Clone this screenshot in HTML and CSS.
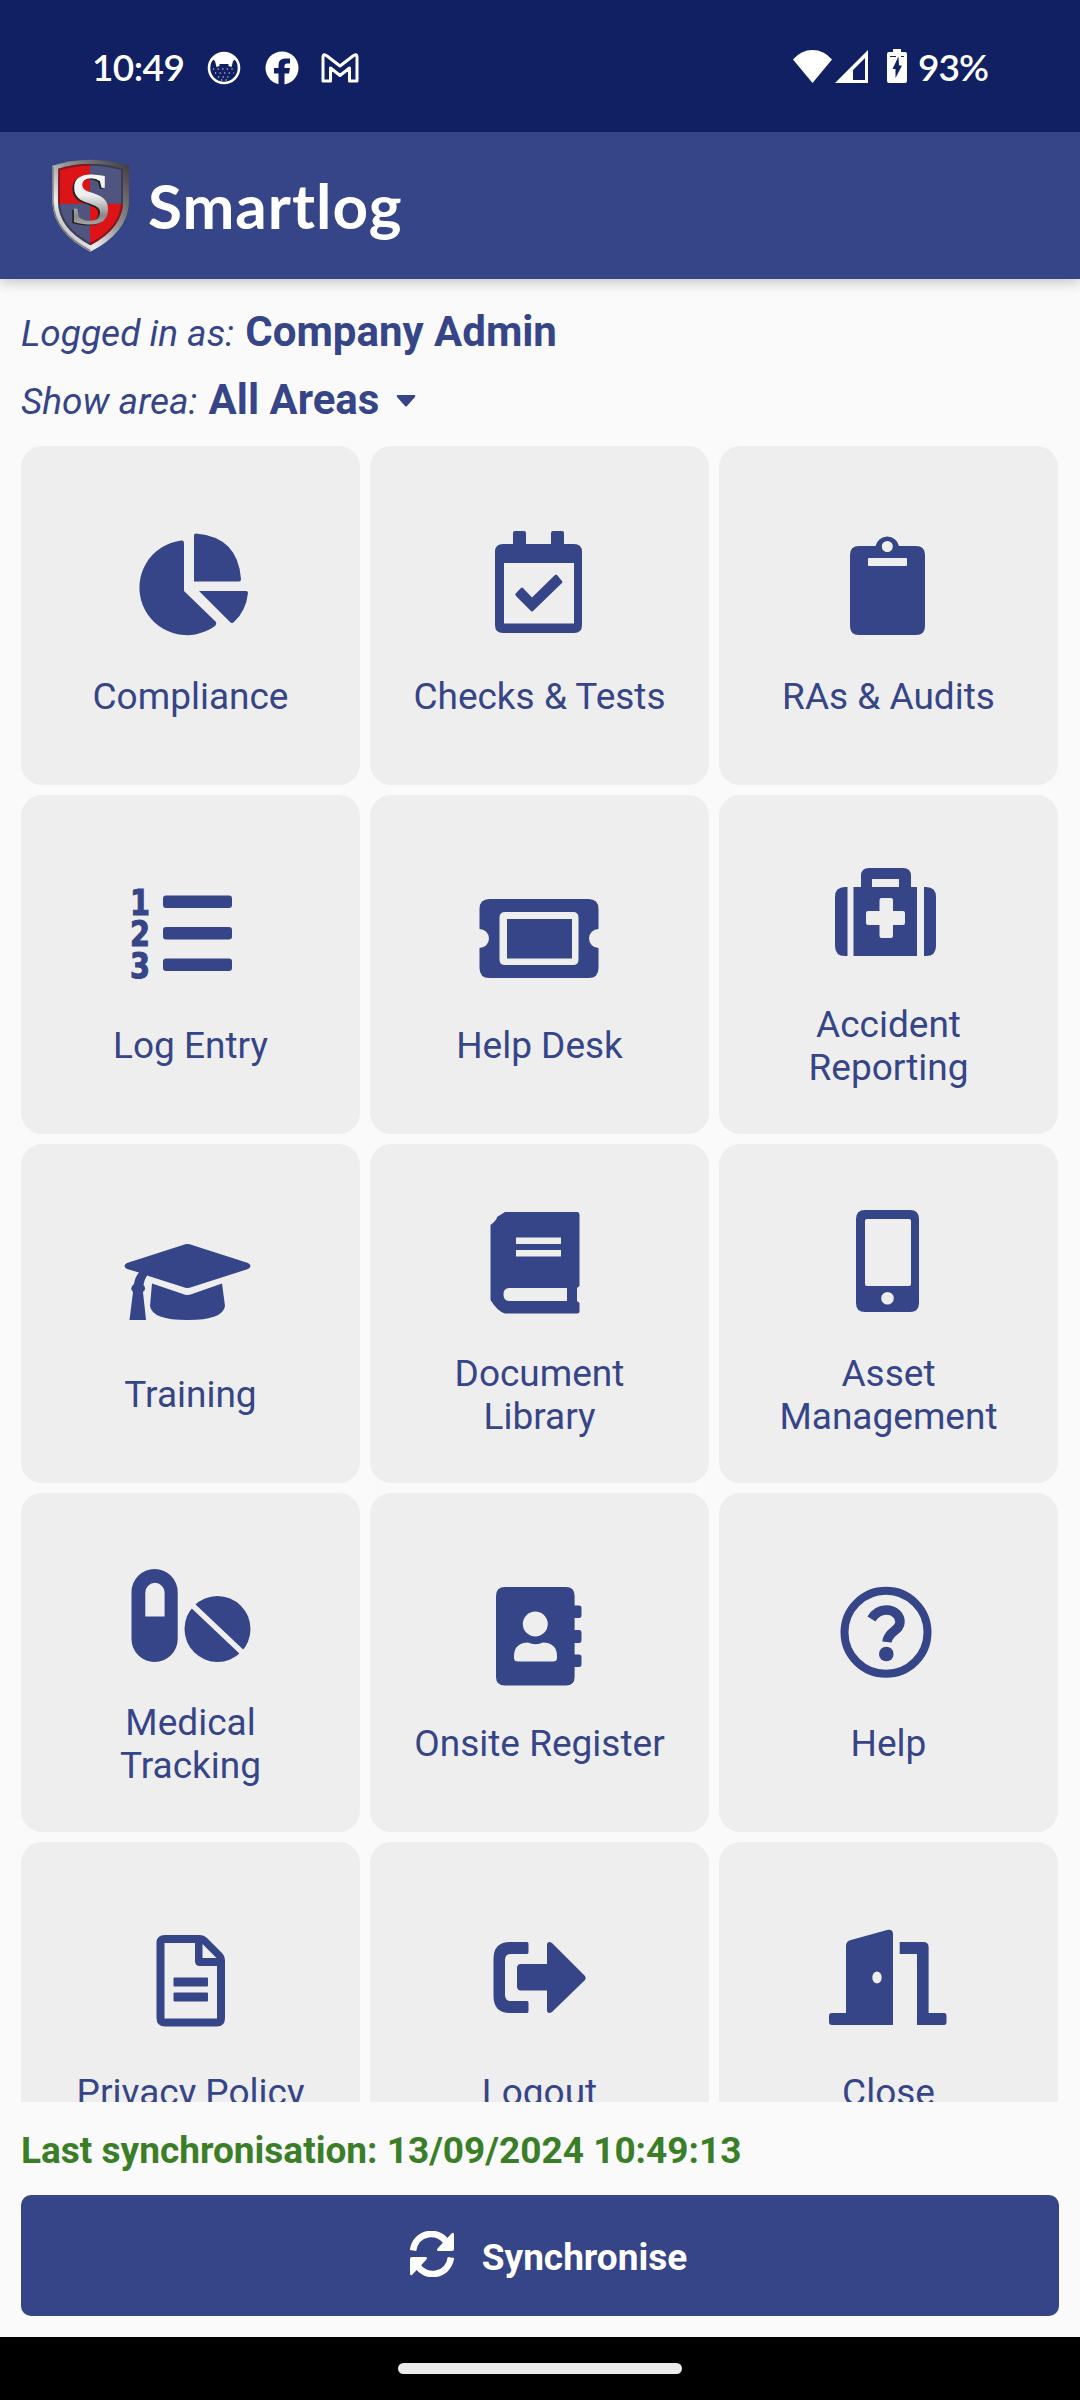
FILE: index.html
```
<!DOCTYPE html>
<html lang="en">
    <head>
        <meta charset="utf-8">
        <title>Smartlog</title>
        <link rel="stylesheet" href="styles.css">
    </head>
    <body>
        <div class="status">
            <span class="time">10:49</span>
            <svg class="cat" width="34" height="34" viewBox="0 0 34 34">
                <circle cx="17" cy="17" r="15" fill="none" stroke="#fff" stroke-width="2.6"/>
                <path fill="#fff" d="M5 8Q9 2 17 2T29 8L26 10L24.500 16L21.500 15V13H12.500V15L9.500 16L8 10Z"/>
                <path fill="none" stroke="#fff" stroke-width="1.2" stroke-dasharray="1.2 3.4" d="M6 18H28M8 22H27M11 26H24M14 29H21"/>
            </svg>
            <svg class="fb" width="34" height="34" viewBox="0 0 34 34">
                <circle cx="17" cy="17" r="16.5" fill="#fff"/>
                <path fill="#112063" d="M13.5 34V22.500H9V17H13.500V14Q13.500 7.500 20 7.500H25V12.500H22Q19.500 12.500 19.500 15V17H25L24 22.500H19.500V34Z"/>
            </svg>
            <svg class="mail" width="38" height="30" viewBox="0 0 38 30">
                <path fill="none" stroke="#fff" stroke-width="3" stroke-linejoin="round" d="M2 4Q2 0 6 3L19 13L32 3Q36 0 36 4V28H28.500V15L19 22.500L9.500 15V28H2Z"/>
            </svg>
            <div class="status-right">
                <svg width="39" height="33" viewBox="0 0 39 33"><path fill="#fff" d="M0 9.500Q8 0 19.500 0T39 9.500L19.500 33Z"/></svg>
                <svg class="signal" width="33" height="33" viewBox="0 0 33 33"><path fill="#fff" fill-rule="evenodd" d="M33 0V33H0ZM30 8L18 20V30H30Z"/></svg>
                <svg class="battery" width="20" height="34" viewBox="0 0 20 34">
                    <path fill="#fff" d="M6 0H14V3H18Q20 3 20 5V32Q20 34 18 34H2Q0 34 0 32V5Q0 3 2 3H6Z"/>
                    <path fill="#112063" d="M3 7H9V8H3ZM14 7H17V8H14ZM11.500 7.500L5.500 20H8.500V29L15 16.500H12Z"/>
                </svg>
                <span class="percent">93%</span>
            </div>
        </div>

        <div class="header">
            <svg class="shield" width="78" height="94" viewBox="36 28 234 282">
                <defs>
                    <linearGradient id="rim" x1="0" y1="1" x2="1" y2="0">
                        <stop offset="0" stop-color="#777"/>
                        <stop offset="0.300" stop-color="#eee"/>
                        <stop offset="0.550" stop-color="#999"/>
                        <stop offset="1" stop-color="#3c3535"/>
                    </linearGradient>
                    <linearGradient id="letter" x1="0" y1="0" x2="0" y2="1">
                        <stop offset="0" stop-color="#fff"/>
                        <stop offset="0.450" stop-color="#eee"/>
                        <stop offset="0.700" stop-color="#888"/>
                        <stop offset="1" stop-color="#ddd"/>
                    </linearGradient>
                    <clipPath id="inner"><path d="M55 57Q152 28 249 57V155Q249 235 151 287Q54 235 54 155Z"/></clipPath>
                </defs>
                <path fill="url(#rim)" d="M37 48Q152 12 267 48V160Q262 250 151 306Q42 250 37 160Z"/>
                <path fill="none" stroke="#777" stroke-width="4" d="M39 52V160Q44 248 151 303"/>
                <g clip-path="url(#inner)">
                    <path fill="#50557f" d="M40 30H270V300H40Z"/>
                    <path fill="#dc1418" d="M40 30H150V162H40ZM150 162H270V300H150Z"/>
                    <path fill="none" stroke="#201c2c" stroke-opacity="0.450" stroke-width="12" d="M55 57Q152 28 249 57V155Q249 235 151 287Q54 235 54 155Z"/>
                </g>
                <text class="letter-shadow" x="85" y="226">S</text>
                <text class="letter" x="90" y="224">S</text>
            </svg>
            <h1>Smartlog</h1>
        </div>

        <div class="main">
            <div class="line"><i>Logged in as:</i> <b>Company Admin</b></div>
            <div class="line"><i>Show area:</i> <b>All Areas</b>
                <svg class="caret" width="20" height="12" viewBox="0 0 20 12"><path d="M2 0H18Q20 0 19 2L11 11Q10 12 9 11L1 2Q0 0 2 0Z"/></svg>
            </div>

            <div class="tiles">
                <div class="tile">
                    <svg viewBox="0 0 160 160">
                        <path d="M71.500 27.500Q74 27 74 30V78L106 109Q107 111 105 113A47.500 47.500 0 1 1 71.500 27.500Z"/>
                        <path d="M84 68.500V22.500Q84 20.500 86 20.500Q128 24 131 66Q131 68.500 129 68.500Z"/>
                        <path d="M89 78H136Q138 78 138 80Q136 98 124 109Q122 111 120 109Z"/>
                    </svg>
                    <p>Compliance</p>
                </div>
                <div class="tile">
                    <svg viewBox="0 0 160 160">
                        <path fill-rule="evenodd" d="M54 20Q54 18 56 18H65Q67 18 67 20V31H92V20Q92 18 94 18H103Q105 18 105 20V31H115Q123 31 123 39V112Q123 120 115 120H44Q36 120 36 112V39Q36 31 44 31H54ZM45 50V110.500H115V50Z"/>
                        <path d="M57 80L62 75Q63 74 64 75L73 84.500L96 62Q97 61 98 62L103 68Q104 69 103 70L74 98Q73 99 72 98L57 83Q55.500 81.500 57 80Z"/>
                    </svg>
                    <p>Checks &amp; Tests</p>
                </div>
                <div class="tile">
                    <svg viewBox="0 0 160 160">
                        <path fill-rule="evenodd" d="M51 33H67.500A12 12 0 0 1 91 33H108Q117 33 117 42V113Q117 122 108 122H51Q42 122 42 113V42Q42 33 51 33ZM79.300 28A5.500 5.500 0 1 0 79.300 39A5.500 5.500 0 1 0 79.300 28ZM61 45Q60 45 60 46V52Q60 53 61 53H98Q99 53 99 52V46Q99 45 98 45Z"/>
                    </svg>
                    <p>RAs &amp; Audits</p>
                </div>

                <div class="tile">
                    <svg viewBox="0 0 160 160">
                        <text class="num" x="20" y="52.500" textLength="20" lengthAdjust="spacingAndGlyphs">1</text>
                        <text class="num" x="20" y="84" textLength="20" lengthAdjust="spacingAndGlyphs">2</text>
                        <text class="num" x="20" y="115.500" textLength="20" lengthAdjust="spacingAndGlyphs">3</text>
                        <rect x="53" y="33.500" width="69" height="12.500" rx="3"/>
                        <rect x="53" y="65" width="69" height="12.500" rx="3"/>
                        <rect x="53" y="96.500" width="69" height="12.500" rx="3"/>
                    </svg>
                    <p>Log Entry</p>
                </div>
                <div class="tile">
                    <svg viewBox="0 0 160 160">
                        <path fill-rule="evenodd" d="M30.500 37H129.500Q139.500 37 139.500 47V67A9.500 9.500 0 0 0 139.500 86V106Q139.500 116 129.500 116H30.500Q20.500 116 20.500 106V86A9.500 9.500 0 0 0 20.500 67V47Q20.500 37 30.500 37ZM46 50Q40.500 50 40.500 55.500V97.500Q40.500 103 46 103H114Q119.500 103 119.500 97.500V55.500Q119.500 50 114 50Z"/>
                        <rect x="48" y="57" width="65" height="39.500"/>
                    </svg>
                    <p>Help Desk</p>
                </div>
                <div class="tile">
                    <svg viewBox="0 0 160 160">
                        <path fill-rule="evenodd" d="M45.500 46H53V35Q53 27 61 27H95Q103 27 103 35V46H109V115H45.500ZM64 38V46H91V38ZM73.500 57Q71.500 57 71.500 59V70H60Q58 70 58 72V82Q58 84 60 84H71.500V95Q71.500 97 73.500 97H83Q85 97 85 95V84H95Q97 84 97 82V72Q97 70 95 70H85V59Q85 57 83 57Z"/>
                        <path d="M39.500 46V115H37Q27 115 27 105V56Q27 46 37 46ZM116 46H118Q128 46 128 56V105Q128 115 118 115H116Z"/>
                    </svg>
                    <p>Accident Reporting</p>
                </div>

                <div class="tile">
                    <svg viewBox="0 0 160 160">
                        <path d="M73 34Q77 32 82 34L138 52Q143 55 138 58L82 76Q77 78 73 76L37 64.500Q34 69 33.500 74Q37 78 33 81L36 109H19.500L23 81Q19 77 24 73Q25 66 29 61.500L17 58Q12 55 17 52Z"/>
                        <path d="M42 72.500L73 83Q77 85 82 83L112 72.500L115 95Q113 109 77.500 109T40 95Z"/>
                    </svg>
                    <p>Training</p>
                </div>
                <div class="tile">
                    <svg viewBox="0 0 160 160">
                        <path fill-rule="evenodd" d="M46 22H118Q120.500 22 120.500 25V96L118 98V111L120.500 113V121Q120.500 123.500 118 123.500H46Q39 122 31.500 110V35Q38 30 38 27ZM57 47.500V54H102V47.500ZM57 60V66.500H102V60ZM50 98Q44.500 98 44.500 104.500T50 111H108V98Z"/>
                    </svg>
                    <p>Document Library</p>
                </div>
                <div class="tile">
                    <svg viewBox="0 0 160 160">
                        <path fill-rule="evenodd" d="M57 20H102Q111 20 111 29V113Q111 122 102 122H57Q48 122 48 113V29Q48 20 57 20ZM59 29Q57 29 57 31V94Q57 96 59 96H101Q103 96 103 94V31Q103 29 101 29ZM79.500 102A6.300 6.300 0 1 0 79.500 114.600A6.300 6.300 0 1 0 79.500 102Z"/>
                    </svg>
                    <p>Asset Management</p>
                </div>

                <div class="tile">
                    <svg viewBox="0 0 160 160">
                        <path fill-rule="evenodd" d="M21.500 53A23 23 0 0 1 67.700 53V100A23 23 0 0 1 21.500 100ZM35.300 77.500H54.600V53.500A9.600 9.600 0 0 0 35.300 53.500Z"/>
                        <circle cx="107.500" cy="90" r="33"/>
                        <path class="slit" d="M80 64L136 117"/>
                    </svg>
                    <p>Medical Tracking</p>
                </div>
                <div class="tile">
                    <svg viewBox="0 0 160 160">
                        <path fill-rule="evenodd" d="M46 27H107Q115.600 27 115.600 36V45.500H120Q122.500 45.500 122.500 48V55Q122.500 58 120 58H115.600V70H120Q122.500 70 122.500 73V80Q122.500 83 120 83H115.600V94.500H120Q122.500 94.500 122.500 97V104Q122.500 107 120 107H115.600V117Q115.600 125.500 107 125.500H46Q37 125.500 37 117V36Q37 27 46 27ZM76.300 51.500A12.500 12.500 0 1 0 76.300 76.500A12.500 12.500 0 1 0 76.300 51.500ZM69 82.500Q55 83 55 96V98Q55 101.500 59 101.500H94Q98 101.500 98 98V96Q98 83 84 82.500Q76.500 86 69 82.500Z"/>
                    </svg>
                    <p>Onsite Register</p>
                </div>
                <div class="tile">
                    <svg viewBox="0 0 160 160">
                        <circle class="stroke" cx="78" cy="72.300" r="41.500"/>
                        <path class="stroke thick" d="M63.500 59Q69 50 78 50C87 50 92 56 92 62C92 71 80 71 79 82"/>
                        <circle cx="78.300" cy="94" r="7.300"/>
                    </svg>
                    <p>Help</p>
                </div>

                <div class="tile">
                    <svg viewBox="0 0 160 160">
                        <path fill-rule="evenodd" d="M55 26H90Q94 26 97 29L112 44Q115 47 115 51V109Q115 117.500 107 117.500H55Q46.500 117.500 46.500 109V34Q46.500 26 55 26ZM54.500 34V109.500H107V57H90Q85 57 85 52V34ZM92.500 35V49H106.500Z"/>
                        <rect x="63.500" y="68.500" width="34.500" height="9" rx="1"/>
                        <rect x="63.500" y="83.500" width="34.500" height="9" rx="1"/>
                    </svg>
                    <p>Privacy Policy</p>
                </div>
                <div class="tile">
                    <svg viewBox="0 0 160 160">
                        <path d="M51 33H68Q69.500 33 69.500 35V43Q69.500 45 68 45H52Q46 45 46 51V86Q46 92 52 92H68Q69.500 92 69.500 94V102Q69.500 104 68 104H51Q34.500 104 34.500 87V50Q34.500 33 51 33Z"/>
                        <path d="M62 55H88V35Q89 31.500 93 34L126 67Q127.500 69 126 71L93 103Q89 105.500 88 102V81.500H62Q58 81.500 58 77V59Q58 55 62 55Z"/>
                    </svg>
                    <p>Logout</p>
                </div>
                <div class="tile">
                    <svg viewBox="0 0 160 160">
                        <path fill-rule="evenodd" d="M38 104V37Q38 32 43 31L79 21Q85 20 85 25V116H24Q21 116 21 113V107Q21 104 24 104ZM69 62.500A4.700 6 0 1 0 69 74.500A4.700 6 0 1 0 69 62.500Z"/>
                        <path d="M91.700 33H115Q120.600 33 120.600 38V104H136Q138.500 104 138.500 107V113Q138.500 116 136 116H109V45H91.700Z"/>
                    </svg>
                    <p>Close</p>
                </div>
            </div>

            <div class="last">Last synchronisation: 13/09/2024 10:49:13</div>
            <div class="button">
                <svg width="46" height="46" viewBox="0 0 46 46">
                    <path fill="none" stroke="#fff" stroke-width="6.500" d="M4 19.500C7 0 30 -2 38 12M42 26.500C39 46 16 48 8 34"/>
                    <path fill="#fff" d="M43 2Q45 1 45 4V18Q45 20 43 20H29Q27 19 29 17ZM3 44Q1 45 1 42V28Q1 26 3 26H17Q19 27 17 29Z"/>
                </svg>
                <b>Synchronise</b>
            </div>
        </div>

        <div class="nav"><div class="pill"></div></div>
    </body>
</html>
```
FILE: styles.css
```
* {
    margin: 0;
    padding: 0;
    box-sizing: border-box;
}
body {
    display: flex;
    flex-direction: column;
    width: 1080px;
    height: 2400px;
    overflow: hidden;
    background: #fafafa;
    color: #354587;
    font-family: Roboto, sans-serif;
    font-size: 37px;
}
.status {
    position: relative;
    z-index: 1;
    display: flex;
    align-items: center;
    height: 132px;
    padding: 3px 92px 0 92px;
    background: #112063;
    color: #fff;
    font-family: Lato, sans-serif;
    font-weight: 600;
}
.time {
    width: 115px;
    padding-bottom: 3px;
    letter-spacing: -0.6px;
}
.percent {
    padding-bottom: 3px;
    letter-spacing: -1px;
}
.fb {
    margin-left: 24px;
}
.mail {
    margin-left: 22px;
}
.status-right {
    display: flex;
    align-items: center;
    margin-left: auto;
}
.status-right svg {
    margin-bottom: 3px;
}
.status-right .signal {
    margin-left: 3px;
}
.status-right .battery {
    margin: 0 11px 4px 19px;
}
.header {
    display: flex;
    align-items: center;
    height: 147px;
    padding-left: 52px;
    background: #354587;
    color: #fff;
    box-shadow: 0 2px 14px rgba(0, 0, 0, 0.25);
}
.header h1 {
    margin-left: 18px;
    padding-bottom: 2px;
    font-family: Lato, sans-serif;
    font-size: 62px;
    font-weight: 700;
    letter-spacing: 1px;
    line-height: 80px;
}
.letter, .letter-shadow {
    font-family: "Liberation Serif", serif;
    font-size: 222px;
    font-weight: bold;
}
.letter {
    fill: url(#letter);
}
.letter-shadow {
    fill: #222;
}
.main {
    display: flex;
    flex-direction: column;
    height: 2058px;
    padding: 19px 21px 21px;
}
.line {
    height: 68px;
    line-height: 68px;
    white-space: nowrap;
}
.line b {
    margin-left: 2px;
    font-size: 42px;
}
.caret {
    margin: 0 0 7px 7px;
    fill: #354587;
}
.tiles {
    display: grid;
    grid-template-columns: repeat(3, 339px);
    grid-auto-rows: 339px;
    gap: 10px;
    height: 1656px;
    margin-top: 12px;
    overflow: hidden;
}
.tile {
    display: flex;
    flex-direction: column;
    align-items: center;
    justify-content: center;
    padding: 0 38px;
    border-radius: 21px;
    background: #eee;
    line-height: 43px;
    text-align: center;
}
.tile svg {
    flex: none;
    width: 160px;
    height: 160px;
    margin: 0 2px 2px 0;
    fill: #354587;
}
.tile .stroke {
    fill: none;
    stroke: #354587;
    stroke-width: 8;
}
.tile .thick {
    stroke-width: 9.5;
}
.tile .slit {
    stroke: #eee;
    stroke-width: 5.5;
}
.num {
    font-family: "DejaVu Sans Condensed", "DejaVu Sans", sans-serif;
    font-size: 35px;
    font-weight: bold;
    stroke: #354587;
    stroke-width: 1;
}
.last {
    height: 93px;
    line-height: 98px;
    color: #3a7f28;
    font-weight: bold;
}
.button {
    display: flex;
    align-items: center;
    justify-content: center;
    height: 121px;
    padding-left: 16px;
    border-radius: 10px;
    background: #354587;
    color: #fff;
}
.button svg {
    margin-bottom: 4px;
}
.button b {
    margin: 4px 0 0 27px;
}
.nav {
    display: flex;
    justify-content: center;
    height: 63px;
    padding-top: 26px;
    background: #000;
}
.pill {
    width: 284px;
    height: 11px;
    border-radius: 6px;
    background: #ebebeb;
}
```
